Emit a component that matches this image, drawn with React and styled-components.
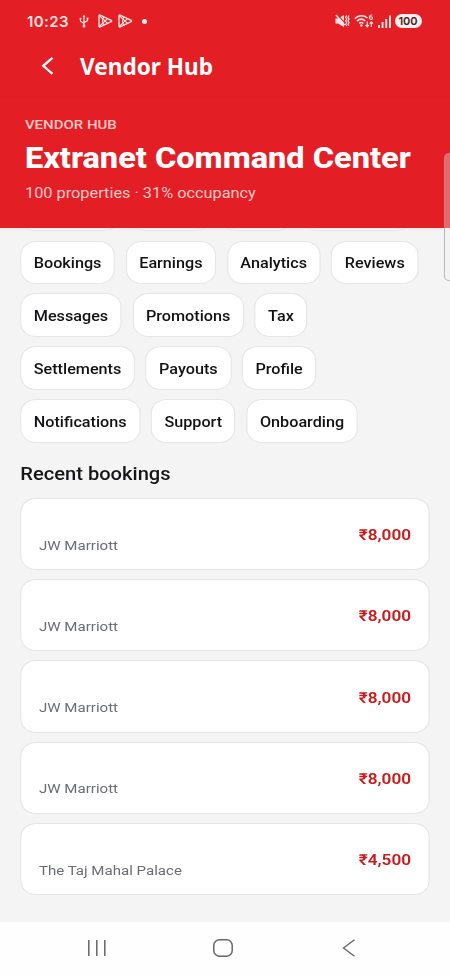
import styled, { createGlobalStyle } from "styled-components";

const chipRows = [
  ["Bookings", "Earnings", "Analytics", "Reviews"],
  ["Messages", "Promotions", "Tax"],
  ["Settlements", "Payouts", "Profile"],
  ["Notifications", "Support", "Onboarding"],
];

const bookings = [
  { id: 1, hotel: "JW Marriott", amount: "₹8,000" },
  { id: 2, hotel: "JW Marriott", amount: "₹8,000" },
  { id: 3, hotel: "JW Marriott", amount: "₹8,000" },
  { id: 4, hotel: "JW Marriott", amount: "₹8,000" },
  { id: 5, hotel: "The Taj Mahal Palace", amount: "₹4,500" },
];

function UsbIcon() {
  return (
    <svg width="10" height="14" viewBox="0 0 10 14" fill="none" stroke="currentColor" strokeWidth="1.2">
      <path d="M5 2v9M1.5 5v2.2L5 9.4M8.5 4.6v2L5 8.8" />
      <path d="M5 0.4 3.6 2.8h2.8z" fill="currentColor" stroke="none" />
      <circle cx="5" cy="12" r="1.5" fill="currentColor" stroke="none" />
      <circle cx="1.5" cy="4.8" r="1" fill="currentColor" stroke="none" />
      <path d="M7.6 3.6h1.8v1.8H7.6z" fill="currentColor" stroke="none" />
    </svg>
  );
}

function PlayIcon() {
  return (
    <svg width="15" height="14" viewBox="0 0 15 14" fill="none" stroke="currentColor" strokeWidth="1.4" strokeLinejoin="round">
      <path d="M1 1.8v10.4c0 .7.6 1 1.2.7l11-5.2c.6-.3.6-1.1 0-1.4l-11-5.2C1.6.8 1 1.1 1 1.8z" />
      <path d="M1.2 1.5 9.6 9.4M1.2 12.5 9.6 4.6M5.6 2.8 4.4 7l1.2 4.2" strokeWidth="1.1" />
    </svg>
  );
}

function MuteIcon() {
  return (
    <svg width="15" height="14" viewBox="0 0 15 14" fill="none" stroke="currentColor">
      <path d="M0.5 4.6h2.7L9 1v12.2L3.2 9.4H.5z" fill="currentColor" stroke="none" />
      <path d="M2 0.2 9.6 8.6" stroke="#e31e24" strokeWidth="1.1" />
      <path d="M1 1 9.6 11" strokeWidth="1.4" />
      <path d="M11.7 1.5l-1 1.8 1 1.8-1 1.8 1 1.8-1 1.8 1 1.5M14 1.5l-1 1.8 1 1.8-1 1.8 1 1.8-1 1.8 1 1.5" strokeWidth="1.2" />
    </svg>
  );
}

function WifiIcon() {
  return (
    <svg width="20" height="14" viewBox="0 0 20 14" fill="none" stroke="currentColor">
      <path d="M0.8 4.6C4.6 1 9.8 1 13.4 4M3 7.2c2.5-2.4 5.8-2.4 8.3-.2M5.2 9.5c1.3-1.2 3-1.2 4.2 0" strokeWidth="1.6" />
      <circle cx="7.3" cy="11.5" r="1.3" fill="currentColor" stroke="none" />
      <path d="M18.3 1.3c-1.6-.8-3 .2-3 2.5 0 1 .6 1.6 1.6 1.6s1.7-.6 1.7-1.4-.7-1.3-1.6-1.3c-.8 0-1.5.4-1.7 1.1" strokeWidth="1.1" />
      <path d="M13.3 7.6v5M11.7 11l1.6 1.8 1.6-1.8M17.3 13V8M15.7 9.6l1.6-1.8 1.6 1.8" strokeWidth="1.2" />
    </svg>
  );
}

function SignalIcon() {
  return (
    <svg width="13" height="13" viewBox="0 0 13 13" fill="currentColor">
      <rect x="0" y="10" width="1.9" height="3" />
      <rect x="3.6" y="7" width="1.9" height="6" />
      <rect x="7.3" y="4" width="1.9" height="9" />
      <rect x="11" y="0.5" width="1.9" height="12.5" />
    </svg>
  );
}

export default function App() {
  return (
    <>
      <GlobalStyle />
      <Screen>
        <StatusBar>
          <Clock>10:23</Clock>
          <UsbIcon />
          <Plays>
            <PlayIcon />
            <PlayIcon />
          </Plays>
          <Dot />
          <StatusRight>
            <MuteIcon />
            <WifiIcon />
            <SignalIcon />
            <Battery>100</Battery>
          </StatusRight>
        </StatusBar>

        <AppBar>
          <svg width="14" height="20" viewBox="0 0 14 20" fill="none" stroke="currentColor" strokeWidth="2.3">
            <path d="M12.5 1.8 3.2 9.8l9.3 8" />
          </svg>
          <AppTitle>Vendor Hub</AppTitle>
        </AppBar>

        <Page>
          <Hero>
            <Eyebrow>VENDOR HUB</Eyebrow>
            <HeroTitle>Extranet Command Center</HeroTitle>
            <HeroMeta>100 properties · 31% occupancy</HeroMeta>
          </Hero>

          <Content>
            <ClippedRow>
              <ClippedChip $width={88} />
              <ClippedChip $width={71} />
              <ClippedChip $width={62} />
              <ClippedChip $width={96} />
            </ClippedRow>

            <Chips>
              {chipRows.map((row) => (
                <ChipRow key={row[0]}>
                  {row.map((label) => (
                    <Chip key={label}>{label}</Chip>
                  ))}
                </ChipRow>
              ))}
            </Chips>

            <SectionTitle>Recent bookings</SectionTitle>

            <BookingList>
              {bookings.map((b) => (
                <BookingCard key={b.id}>
                  <Hotel>{b.hotel}</Hotel>
                  <Amount>{b.amount}</Amount>
                </BookingCard>
              ))}
            </BookingList>
          </Content>
        </Page>

        <NavBar>
          <svg width="20" height="18" viewBox="0 0 20 18" fill="none" stroke="currentColor" strokeWidth="1.5">
            <path d="M2.8 1v16M10.8 1v16M18.8 1v16" />
          </svg>
          <svg width="20" height="18" viewBox="0 0 20 18" fill="none" stroke="currentColor" strokeWidth="1.5">
            <rect x="0.8" y="0.8" width="18.4" height="16.4" rx="5.5" />
          </svg>
          <svg width="16" height="18" viewBox="-3 0 16 18" fill="none" stroke="currentColor" strokeWidth="1.4">
            <path d="M12.5 0.8 1.5 9l11 8.2" />
          </svg>
        </NavBar>

        <EdgeHandle />
      </Screen>
    </>
  );
}

const GlobalStyle = createGlobalStyle`
  * {
    box-sizing: border-box;
  }

  body {
    margin: 0;
    font-family: Roboto, "Noto Sans", sans-serif;
    background: #f4f4f4;
  }

  h1, h2, p {
    margin: 0;
  }
`;

const Screen = styled.div`
  position: relative;
  display: flex;
  flex-direction: column;
  width: 450px;
  height: 975px;
  overflow: hidden;
  background: #f4f4f4;
`;

const StatusBar = styled.div`
  display: flex;
  align-items: center;
  height: 42px;
  padding: 0 28.5px 0 27px;
  color: #ffe3e0;
  background: #e31e24;

  svg {
    display: block;
    flex-shrink: 0;
  }
`;

const Clock = styled.span`
  width: 52px;
  font-family: Inter, sans-serif;
  font-size: 15px;
  font-weight: 600;
  letter-spacing: 0.4px;
`;

const Plays = styled.div`
  display: flex;
  gap: 5px;
  margin-left: 9px;
`;

const Dot = styled.span`
  width: 5px;
  height: 5px;
  margin-left: 9px;
  border-radius: 50%;
  background: #fff0ef;
`;

const StatusRight = styled.div`
  display: flex;
  align-items: center;
  gap: 4px;
  margin-left: auto;
`;

const Battery = styled.span`
  width: 27px;
  height: 14px;
  border-radius: 7px;
  background: #ffeceb;
  color: #3a2326;
  font-family: Inter, sans-serif;
  font-size: 11px;
  font-weight: 600;
  line-height: 14px;
  text-align: center;
`;

const AppBar = styled.header`
  display: flex;
  align-items: center;
  height: 55px;
  padding: 0 40px 7px;
  gap: 26px;
  color: #fff;
  background: #e31e24;
  border-bottom: 1px solid #db1f25;
`;

const AppTitle = styled.h1`
  padding-top: 2px;
  font-family: "Noto Sans", sans-serif;
  font-size: 22.6px;
  font-weight: 700;
  line-height: 32px;
`;

/* 400px layout widened to the full 450px screen */
const Page = styled.div`
  display: flex;
  flex: 1;
  flex-direction: column;
  width: 400px;
  transform: scaleX(1.125);
  transform-origin: 0 0;
`;

const Hero = styled.section`
  height: 131px;
  padding: 19px 22.2px 0;
  background: #e31e24;
`;

const Eyebrow = styled.p`
  font-size: 13.3px;
  font-weight: 500;
  line-height: 18px;
  color: #ffc9c8;
`;

const HeroTitle = styled.h2`
  margin-top: 6px;
  font-size: 28.9px;
  font-weight: 800;
  line-height: 36px;
  white-space: nowrap;
  color: #fff;
`;

const HeroMeta = styled.p`
  margin-top: 8px;
  font-size: 14.5px;
  line-height: 20px;
  color: #ffc9c8;
`;

const Content = styled.main`
  flex: 1;
  padding: 0 18px;
`;

/* tail of the chip row scrolled under the hero */
const ClippedRow = styled.div`
  display: flex;
  align-items: flex-end;
  gap: 10px;
  height: 3px;
  margin: 0 -18px;
  padding: 0 18px;
  overflow: hidden;
  background: #f6eff0;
`;

const ClippedChip = styled.span`
  flex-shrink: 0;
  width: ${({ $width }) => $width}px;
  height: 43px;
  border: 1px solid #ebe5e7;
  border-radius: 13px;
  background: #faf2f4;
`;

const Chips = styled.div`
  display: flex;
  flex-direction: column;
  gap: 9px;
  padding-top: 9.5px;
`;

const ChipRow = styled.div`
  display: flex;
  gap: 9.6px;
`;

const Chip = styled.button`
  height: 43.8px;
  padding: 3px 11px 0;
  border: 1px solid #e6e6e7;
  border-radius: 14px;
  background: #fff;
  color: #121214;
  font-family: inherit;
  font-size: 14.4px;
  font-weight: 500;
`;

const SectionTitle = styled.h2`
  margin-top: 18px;
  font-size: 17.9px;
  font-weight: 500;
  line-height: 25px;
  color: #151517;
`;

const BookingList = styled.div`
  display: flex;
  flex-direction: column;
  gap: 9px;
  margin-top: 12.3px;
`;

const BookingCard = styled.article`
  display: flex;
  align-items: center;
  justify-content: space-between;
  height: 72.25px;
  padding: 0 15.6px;
  border: 1px solid #e5e5e6;
  border-radius: 14px;
  background: #fff;
`;

const Hotel = styled.p`
  padding-top: 23px;
  font-size: 13.4px;
  line-height: 20px;
  color: #6b6d73;
`;

const Amount = styled.span`
  padding-top: 2px;
  font-size: 15.3px;
  font-weight: 600;
  color: #ca1a1c;
`;

const NavBar = styled.nav`
  display: flex;
  align-items: center;
  gap: 106.5px;
  height: 53px;
  padding: 0 0 2px 86px;
  background: #fefefe;
  color: #65656a;
`;

/* translucent edge panel grip that floats over the screen */
const EdgeHandle = styled.div`
  position: absolute;
  top: 153px;
  right: -4px;
  width: 10px;
  height: 128px;
  border: 1px solid rgba(150, 150, 150, 0.65);
  border-radius: 5px;
  background: rgba(240, 240, 240, 0.35);
`;
